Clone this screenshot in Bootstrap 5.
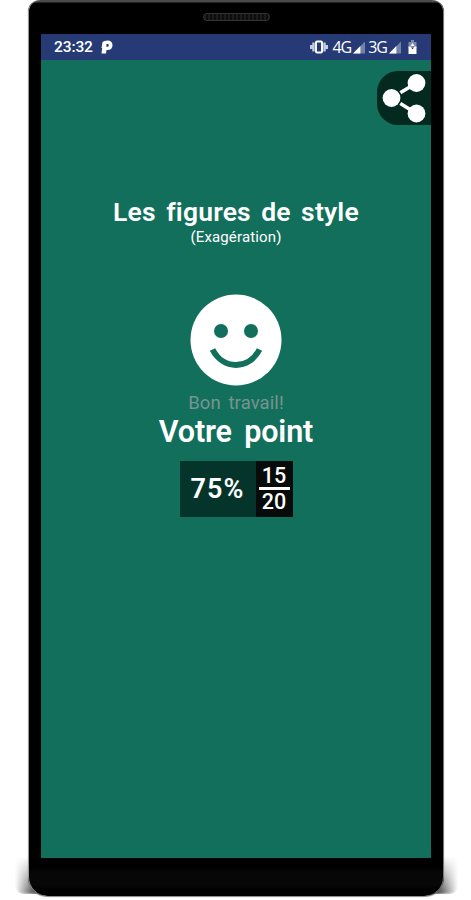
<!DOCTYPE html>
<html lang="fr">
<head>
<meta charset="utf-8">
<meta name="viewport" content="width=device-width, initial-scale=1">
<title>Les figures de style</title>
<link href="https://cdn.jsdelivr.net/npm/bootstrap@5.3.0/dist/css/bootstrap.min.css" rel="stylesheet">
<style>
body{background:#fff;font-family:Roboto,"Liberation Sans",sans-serif;height:900px}
.phone{width:416px;height:896px;margin:0 0 0 28px;padding:34px 13px 0;background:linear-gradient(#4a4a4a 0 2px,#000 3px 868px,#070707 872px 885px,#000 890px);border-radius:12px 12px 19px 19px;box-shadow:inset 1px 0 #999,inset -1px 0 #777,0 1px 1px #888}
.foot-shade{left:15px;top:856px;width:443px;height:38px;background:linear-gradient(90deg,transparent,#888 12px,#222 22px,#222 421px,#888 431px,transparent);-webkit-mask-image:linear-gradient(transparent,#000);mask-image:linear-gradient(transparent,#000);border-radius:0 0 8px 8px;filter:blur(1.5px)}
.speaker{left:203px;top:13px;width:67px;height:8px;border:1px solid #333;border-radius:4px;background:repeating-linear-gradient(90deg,#1c1c1c 0 2px,#0d0d0d 2px 4px)}
.screen{width:390px;height:824px;background:#126f5c;color:#fff}
.status{height:26px;background:#263b75;padding:0 14px 0 13px}
.clock{font-size:15.5px;line-height:26px;font-weight:500;letter-spacing:-.1px}
.net{font-family:"Open Sans",sans-serif;font-size:16px;line-height:26px;letter-spacing:-1px}
.signal{margin-left:2px}
.net-next{margin-left:3px}
.battery{margin-left:7px}
.share{width:54px;height:54px;margin-top:11px;border-radius:21px 0 0 21px;background:#042a20}
.line-text{white-space:nowrap;text-align:center;font-variant-ligatures:none}
.title{font-size:26.5px;line-height:32px;font-weight:600;letter-spacing:.2px;word-spacing:3.500px;margin-top:71px}
.sub{font-size:15px;line-height:18px;letter-spacing:.15px}
.face{margin-top:48px}
.praise{font-size:18.5px;line-height:22px;color:#77958f;letter-spacing:.1px;word-spacing:3px;margin-top:6px}
.result{font-size:30.5px;line-height:36px;font-weight:600;letter-spacing:-.15px;word-spacing:5px}
.score{width:113px;height:56px;margin-top:11px;background:#05352a}
.pct{width:76px;font-size:27px;line-height:56px;font-weight:600;letter-spacing:1px;text-align:center}
.fraction{width:37px;background:#070b0a;font-size:21.5px;line-height:22px;font-weight:500;padding-top:4px}
.bar{width:31px;height:3px;background:#fff}
.denom{margin-top:1px}
</style>
<script src="https://cdn.jsdelivr.net/npm/bootstrap@5.3.0/dist/js/bootstrap.bundle.min.js"></script>
</head>
<body class="position-relative overflow-hidden">
<div class="foot-shade position-absolute"></div>
<main class="phone position-relative">
<div class="screen d-flex flex-column align-items-center">
<header class="status w-100 d-flex justify-content-between align-items-center">
<div class="d-flex align-items-center"><span class="clock">23:32</span>
<svg class="ms-2" width="12" height="14" viewBox="0 0 12 14"><path fill="#fff" fill-rule="evenodd" d="M1.500 2Q3 .5 6.500 .5Q11.500 .5 11.500 5.200Q11.500 10 6.500 10L5.500 10 5 13.500H.5L1.200 8 .5 8ZM5.500 4L5.300 6.800H6.500Q7.800 6.800 7.800 5.200Q7.800 4 6.700 4Z"/></svg></div>
<div class="d-flex align-items-center">
<svg width="18" height="14" viewBox="0 0 18 14"><path d="M3.500 2.500v9M1.200 5v4M14.500 2.500v9M16.800 5v4" stroke="#c4cde6" stroke-width="2.400"/><rect x="6" y="1.500" width="6" height="11" rx="1" fill="none" stroke="#fff" stroke-width="1.900"/></svg>
<span class="net ms-1">4G</span>
<svg class="signal" width="12" height="13" viewBox="0 0 13 13"><path d="M0 13L13 0V13Z" fill="#7481a8"/><path d="M0 13L8 5V13Z" fill="#fff"/></svg>
<span class="net net-next">3G</span>
<svg class="signal" width="12" height="13" viewBox="0 0 13 13"><path d="M0 13L13 0V13Z" fill="#7481a8"/><path d="M0 13L8 5V13Z" fill="#fff"/></svg>
<svg class="battery" width="9" height="14" viewBox="0 0 9 14"><path d="M3 0H6V2H8.500V8H.5V2H3Z" fill="#7d89af"/><path d="M.5 6.500H2.500L4.500 9.500 6.500 6.500H8.500V14H.5Z" fill="#fff"/><path d="M4.500 3L6.500 6H2.500Z" fill="#fff"/></svg>
</div>
</header>
<button class="share btn border-0 p-0 align-self-end d-block" aria-label="Partager"><svg class="d-block" width="54" height="54" viewBox="0 0 54 54"><path d="M14.500 27L39.500 12M14.500 27L39.500 42.500" stroke="#fff" stroke-width="3.600"/><circle cx="14.500" cy="27" r="10.500" fill="#042a20"/><g fill="#fff"><circle cx="14.500" cy="27" r="8.900"/><circle cx="39.500" cy="12" r="8.900"/><circle cx="39.500" cy="42.500" r="8.900"/></g></svg></button>
<h1 class="title line-text mb-0">Les figures de style</h1>
<p class="sub line-text mb-0">(Exagération)</p>
<svg class="face flex-shrink-0" width="92" height="92" viewBox="0 0 92 92"><circle cx="46" cy="46" r="45.500" fill="#fff"/><g fill="#126f5c"><circle cx="31" cy="37" r="7"/><circle cx="61" cy="37" r="7"/></g><path d="M22.500 55.500C33 76 59 76 69.500 55.500" fill="none" stroke="#126f5c" stroke-width="6"/></svg>
<p class="praise line-text mb-0">Bon travail!</p>
<h2 class="result line-text mb-0">Votre point</h2>
<div class="score d-flex flex-shrink-0"><div class="pct">75%</div><div class="fraction d-flex flex-column align-items-center"><span>15</span><div class="bar"></div><span class="denom">20</span></div></div>
</div>
</main>
<div class="speaker position-absolute"></div>
</body>
</html>
